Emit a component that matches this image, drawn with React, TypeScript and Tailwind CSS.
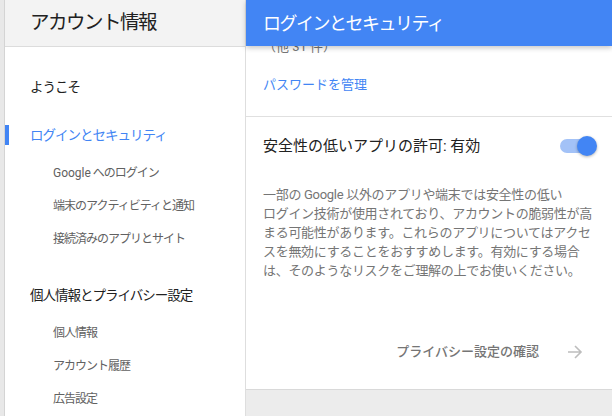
import React from 'react';

const font = { fontFamily: 'Roboto, "Noto Sans CJK JP", sans-serif' };

function NavItem({ label, sub, active, gap }: { label: React.ReactNode; sub?: boolean; active?: boolean; gap: string }) {
    return (
        <div
            className={`flex h-[20px] items-center whitespace-nowrap ${gap} ${
                active ? 'border-l-4 border-[#4285f4] pl-[21px] text-[#4285f4]' : sub ? 'pl-[48px] text-[#616161]' : 'pl-[25px] text-[#212121]'
            } ${sub ? 'text-[12px] tracking-[-1px]' : 'text-[13.5px] tracking-[-1px]'}`}
        >
            {label}
        </div>
    );
}

export default function App() {
    return (
        <div className="flex h-[416px] w-[612px] overflow-hidden bg-white" style={font}>
            {/* left strip */}
            <div className="w-[5px] shrink-0 border-r border-[#d4d4d4] bg-[#e8e8e8]" />

            {/* sidebar */}
            <aside className="flex w-[241px] shrink-0 flex-col border-r border-[#dedede] bg-white">
                <div className="flex h-[47px] shrink-0 items-center border-b border-[#dcdcdc] bg-[#f3f3f3] pl-[25px] text-[19.5px] tracking-[-1.5px] text-[#212121]">
                    アカウント情報
                </div>
                <NavItem label="ようこそ" gap="mt-[30px]" />
                <NavItem label="ログインとセキュリティ" active gap="mt-[28px]" />
                <NavItem
                    label={
                        <>
                            <span className="tracking-normal">Google</span>&nbsp;へのログイン
                        </>
                    }
                    sub
                    gap="mt-[18px]"
                />
                <NavItem label="端末のアクティビティと通知" sub gap="mt-[13px]" />
                <NavItem label="接続済みのアプリとサイト" sub gap="mt-[13px]" />
                <NavItem label="個人情報とプライバシー設定" gap="mt-[36px]" />
                <NavItem label="個人情報" sub gap="mt-[18px]" />
                <NavItem label="アカウント履歴" sub gap="mt-[13px]" />
                <NavItem label="広告設定" sub gap="mt-[13px]" />
            </aside>

            {/* main */}
            <main className="flex flex-1 flex-col bg-[#ececec]">
                <header className="relative z-10 flex h-[46px] shrink-0 items-center bg-[#4285f4] pl-[17px] text-[18px] tracking-[-1.5px] text-white shadow-[0_2px_5px_rgba(0,0,0,0.22)]">
                    ログインとセキュリティ
                </header>

                <div className="border-b border-[#d9d9d9] bg-white">
                    {/* section 1 */}
                    <div className="flex h-[71px] flex-col border-b border-[#e0e0e0] px-[17px]">
                        <div className="-mt-[9px] h-[20px] leading-[20px] text-[13px] text-[#757575]">（他 31 件）</div>
                        <div className="mt-[18px] h-[20px] leading-[20px] text-[13px] text-[#4285f4]">パスワードを管理</div>
                    </div>

                    {/* section 2 */}
                    <div className="pb-[27px] pl-[17px] pr-[15px] pt-[18px]">
                        <div className="flex h-[22px] items-center justify-between">
                            <span className="text-[15px] text-[#212121]">安全性の低いアプリの許可: 有効</span>
                            <div className="relative h-[20px] w-[37px]">
                                <div className="absolute left-0 top-[3px] h-[14px] w-[30px] rounded-full bg-[#a3c2f7]" />
                                <div className="absolute right-0 top-0 size-[20px] rounded-full bg-[#4285f4] shadow-[0_1px_3px_rgba(0,0,0,0.3)]" />
                            </div>
                        </div>
                        <p className="mt-[28px] whitespace-nowrap text-[13px] leading-[19px] tracking-[-0.3px] text-[#757575]">
                            一部の Google 以外のアプリや端末では安全性の低い
                            <br />
                            ログイン技術が使用されており、アカウントの脆弱性が高
                            <br />
                            まる可能性があります。これらのアプリについてはアクセ
                            <br />
                            スを無効にすることをおすすめします。有効にする場合
                            <br />
                            は、そのようなリスクをご理解の上でお使いください。
                        </p>
                        <div className="mt-[62px] flex h-[20px] items-center justify-end pr-[14px]">
                            <span className="text-[13px] font-medium text-[#757575]">プライバシー設定の確認</span>
                            <svg className="ml-[28px] h-[16px] w-[16px]" viewBox="0 0 16 16" fill="none" stroke="#bdbdbd" strokeWidth={1.6}>
                                <path d="M1 8h13M8 2l6 6-6 6" />
                            </svg>
                        </div>
                    </div>
                </div>
            </main>
        </div>
    );
}
